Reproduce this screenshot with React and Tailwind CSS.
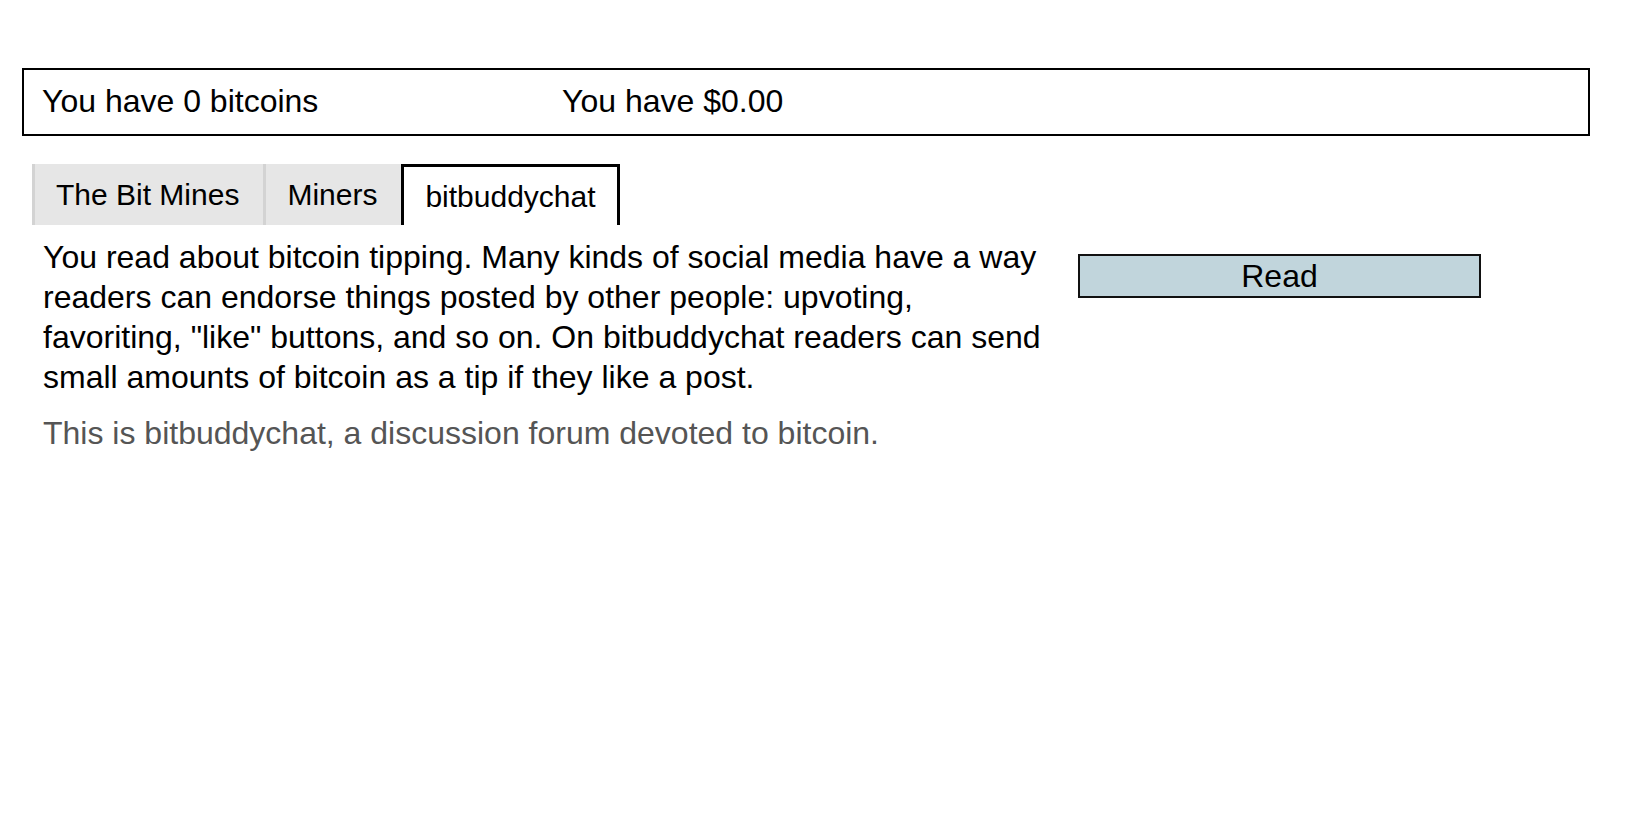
import React, { useState } from 'react';

const tabs = ['The Bit Mines', 'Miners', 'bitbuddychat'];

function App() {
    const [activeTab, setActiveTab] = useState('bitbuddychat');

    return (
        <div className="min-h-screen bg-white text-black pt-[68px] px-[22px]" style={{ fontFamily: '"Liberation Sans", Arial, Helvetica, sans-serif' }}>
            {/* wallet bar */}
            <div className="w-[1568px] h-[68px] border-2 border-black flex items-center pl-[18px] pb-[2px] text-[32px]">
                <span className="w-[520px]">You have 0 bitcoins</span>
                <span>You have $0.00</span>
            </div>

            {/* tabs */}
            <div className="flex ml-[10px] mt-[28px]">
                {tabs.map((tab) =>
                    tab === activeTab ? (
                        <button
                            key={tab}
                            className="h-[61px] px-[21px] text-[30px] bg-white border-[3px] border-b-0 border-black"
                            onClick={() => setActiveTab(tab)}
                        >
                            {tab}
                        </button>
                    ) : (
                        <button
                            key={tab}
                            className="h-[61px] pl-[21px] pr-[24px] text-[30px] bg-[#e6e6e6] border-l-[3px] border-[#d3d3d3]"
                            onClick={() => setActiveTab(tab)}
                        >
                            {tab}
                        </button>
                    )
                )}
            </div>

            {/* content */}
            <div className="flex items-start ml-[21px] mt-[12px]">
                <div className="w-[1005px]">
                    <p className="text-[32px] leading-[40px]">
                        You read about bitcoin tipping. Many kinds of social media have a way readers can endorse things posted by other people: upvoting, favoriting, "like" buttons, and so on. On bitbuddychat readers can send small amounts of bitcoin as a tip if they like a post.
                    </p>
                    <p className="text-[32px] leading-[40px] mt-[16px] text-[#555555]">
                        This is bitbuddychat, a discussion forum devoted to bitcoin.
                    </p>
                </div>
                <button className="ml-[30px] mt-[17px] w-[403px] h-[44px] border-2 border-[#111111] bg-[#c1d5dc] text-[32px] leading-none">
                    Read
                </button>
            </div>
        </div>
    );
}

export default App;
